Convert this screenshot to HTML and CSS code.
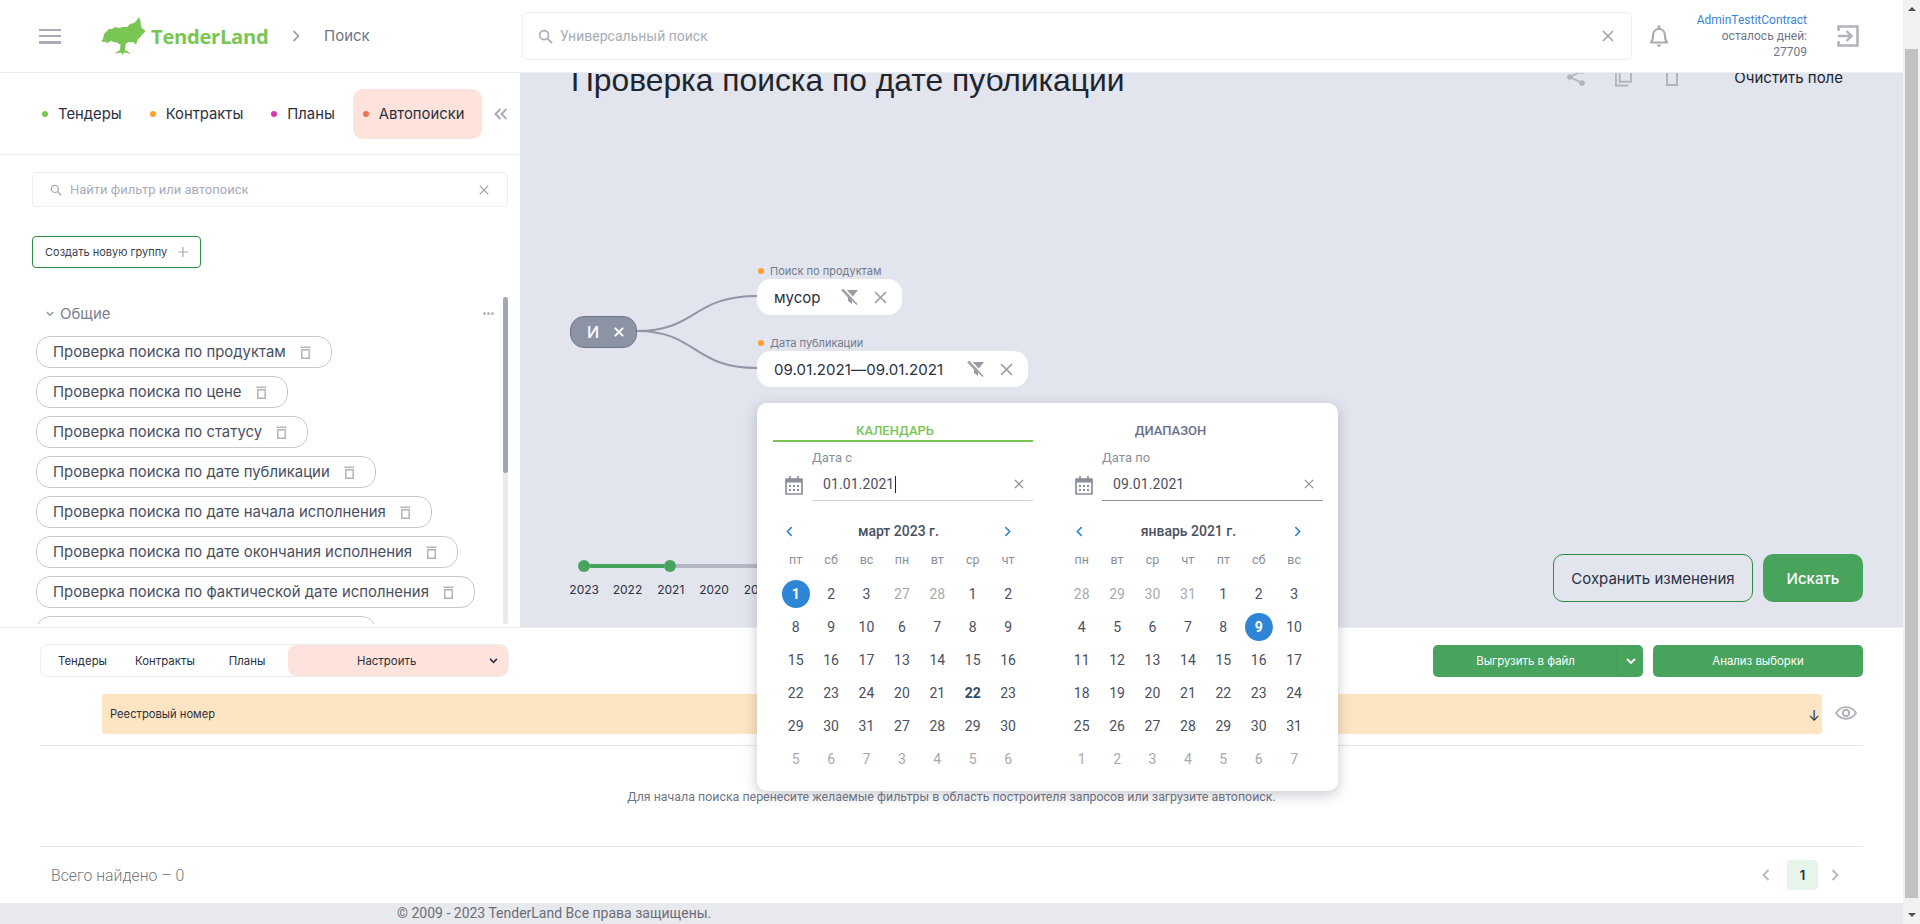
FILE: index.html
```html
<!DOCTYPE html>
<html lang="ru">
<head>
<meta charset="utf-8">
<title>TenderLand — Поиск</title>
<link rel="stylesheet" href="styles.css">
</head>
<body>
<svg class="defs" width="0" height="0" aria-hidden="true">
  <symbol id="i-search" viewBox="0 0 16 16"><circle cx="6.5" cy="6.5" r="4.8" fill="none" stroke="currentColor" stroke-width="1.7"/><path d="M10 10l5 5" stroke="currentColor" stroke-width="2" fill="none"/></symbol>
  <symbol id="i-x" viewBox="0 0 12 12"><path d="M1 1l10 10M11 1L1 11" stroke="currentColor" stroke-width="1.5" fill="none"/></symbol>
  <symbol id="i-x2" viewBox="0 0 12 12"><path d="M1 1l10 10M11 1L1 11" stroke="currentColor" stroke-width="2.4" fill="none"/></symbol>
  <symbol id="i-trash" viewBox="0 0 11 13"><path d="M0.5 1.2h10" stroke="currentColor" stroke-width="1.4"/><path d="M1.8 3.700h7.400v8.600H1.800z" fill="none" stroke="currentColor" stroke-width="1.400"/></symbol>
  <symbol id="i-filter" viewBox="0 0 17 16"><path d="M0 1h17l-6 7.500V15l-4-3V8.500z" fill="currentColor"/><path d="M2.500 0L17 15" stroke="#fff" stroke-width="3"/><path d="M1.500 0L16 15.500" stroke="currentColor" stroke-width="1.600"/></symbol>
  <symbol id="i-cal" viewBox="0 0 18 20"><path d="M1 4h16v15H1z" fill="none" stroke="currentColor" stroke-width="1.7" stroke-linejoin="round"/><path d="M1 4h16v3.5H1z" fill="currentColor"/><path d="M5 1v4M13 1v4" stroke="currentColor" stroke-width="1.7"/><path d="M4 10h2v2H4zM8 10h2v2H8zM12 10h2v2h-2zM4 14h2v2H4zM8 14h2v2H8zM12 14h2v2h-2z" fill="currentColor"/></symbol>
  <symbol id="i-left" viewBox="0 0 8 12"><path d="M6.5 1L1.5 6l5 5" fill="none" stroke="currentColor" stroke-width="1.8"/></symbol>
  <symbol id="i-right" viewBox="0 0 8 12"><path d="M1.5 1l5 5-5 5" fill="none" stroke="currentColor" stroke-width="1.8"/></symbol>
  <symbol id="i-down" viewBox="0 0 10 7"><path d="M1 1l4 4 4-4" fill="none" stroke="currentColor" stroke-width="1.8"/></symbol>
</svg>

<div class="page">
  <header class="topbar">
    <div class="brand">
      <div class="burger"><span></span><span></span><span></span></div>
      <svg class="tree" viewBox="0 0 44 40" aria-hidden="true"><path fill="#7ac655" d="M0 24l2-2 1-5 5-5 3 0 3-2 4 1 4-1 4 0 3-3 4-1 3-3 2-3 1.500 4 .5 5 1 2 3.500 3-2 2.500-2 1.500-1 2-2.500 2-1 3-1 2.500-3-2.500-2 .5-2-.5-3 1.500-.5 1.500-.5 5 6.500 4-7.500-1.500-1.500 2.500-1.500-2.500-6.500 1 5.500-3.500.5-6-1.500 0-2-1.500-4-.5-1.500-1.500-3 2-2 .5-1-1.500-2 .5z"/></svg>
      <span class="brand-name">TenderLand</span>
      <svg class="crumb-arrow"><use href="#i-right"/></svg>
      <span class="crumb">Поиск</span>
    </div>
    <div class="global-search">
      <svg class="gs-icon"><use href="#i-search"/></svg>
      <span class="gs-text">Универсальный поиск</span>
      <svg class="gs-x"><use href="#i-x"/></svg>
    </div>
    <svg class="bell" viewBox="0 0 20 24" aria-hidden="true"><path d="M2 18.500c1.500-1.500 2-3 2-6.500 0-4 2.500-7 6-7s6 3 6 7c0 3.500.5 5 2 6.500z" fill="none" stroke="currentColor" stroke-width="2.200" stroke-linejoin="round"/><path d="M8.500 1.500h3v3h-3zM7.500 20.500h5L10 23.500z" fill="currentColor"/></svg>
    <div class="user">
      <div class="user-name">AdminTestitContract</div>
      <div>осталось дней:</div>
      <div>27709</div>
    </div>
    <svg class="exit" viewBox="0 0 22 22" aria-hidden="true"><path d="M1.500 6V1.500h19v19h-19V16" fill="none" stroke="currentColor" stroke-width="2.600"/><path d="M1 11h13M9.500 6l5 5-5 5" fill="none" stroke="currentColor" stroke-width="2.400"/></svg>
  </header>

  <div class="middle">
    <aside class="sidebar">
      <nav class="side-tabs">
        <span class="side-tab"><i class="dot dot-green"></i>Тендеры</span>
        <span class="side-tab"><i class="dot dot-orange"></i>Контракты</span>
        <span class="side-tab"><i class="dot dot-pink"></i>Планы</span>
        <span class="side-tab side-tab-on"><i class="dot dot-red"></i>Автопоиски</span>
        <svg class="collapse" viewBox="0 0 14 12" aria-hidden="true"><path d="M6.500 1L1.500 6l5 5M12.500 1l-5 5 5 5" fill="none" stroke="currentColor" stroke-width="2"/></svg>
      </nav>
      <div class="side-search">
        <svg class="ss-icon"><use href="#i-search"/></svg>
        <span class="ss-text">Найти фильтр или автопоиск</span>
        <svg class="ss-x"><use href="#i-x"/></svg>
      </div>
      <button class="new-group">Создать новую группу<svg viewBox="0 0 10 10" aria-hidden="true"><path d="M5 0v10M0 5h10" stroke="currentColor" stroke-width="1.200"/></svg></button>
      <div class="side-list">
        <div class="side-content">
          <div class="group-head">
            <svg class="group-chev"><use href="#i-down"/></svg>
            <span class="group-name">Общие</span>
            <span class="group-more"><i></i><i></i><i></i></span>
          </div>
          <div class="chips">
            <div class="chip"><span>Проверка поиска по продуктам</span><svg><use href="#i-trash"/></svg></div>
            <div class="chip"><span>Проверка поиска по цене</span><svg><use href="#i-trash"/></svg></div>
            <div class="chip"><span>Проверка поиска по статусу</span><svg><use href="#i-trash"/></svg></div>
            <div class="chip"><span>Проверка поиска по дате публикации</span><svg><use href="#i-trash"/></svg></div>
            <div class="chip"><span>Проверка поиска по дате начала исполнения</span><svg><use href="#i-trash"/></svg></div>
            <div class="chip"><span>Проверка поиска по дате окончания исполнения</span><svg><use href="#i-trash"/></svg></div>
            <div class="chip"><span>Проверка поиска по фактической дате исполнения</span><svg><use href="#i-trash"/></svg></div>
            <div class="chip"><span>Проверка поиска по дате публикации</span><svg><use href="#i-trash"/></svg></div>
          </div>
        </div>
        <div class="side-scroll"><div class="side-thumb"></div></div>
      </div>
    </aside>

    <main class="workspace">
      <div class="ws-head">
        <h1 class="ws-title">Проверка поиска по дате публикации</h1>
        <svg class="ws-share" viewBox="0 0 18 18" aria-hidden="true"><circle cx="3" cy="9" r="2.800" fill="currentColor"/><circle cx="15" cy="3" r="2.800" fill="currentColor"/><circle cx="15" cy="15" r="2.800" fill="currentColor"/><path d="M3 9l12-6M3 9l12 6" stroke="currentColor" stroke-width="1.800"/></svg>
        <svg class="ws-copy" viewBox="0 0 18 20" aria-hidden="true"><path d="M1 4v15h13M5 1h12v14H5z" fill="none" stroke="currentColor" stroke-width="2"/></svg>
        <svg class="ws-clip" viewBox="0 0 12 18" aria-hidden="true"><path d="M1 1h10v16H1z" fill="none" stroke="currentColor" stroke-width="2"/></svg>
        <span class="ws-clear">Очистить поле</span>
      </div>
      <div class="canvas">
        <svg class="links" viewBox="0 0 120 90" aria-hidden="true"><path d="M0 43C60 43 55 8 120 8M0 43C60 43 55 80 120 80" fill="none" stroke="#8f96a6" stroke-width="2"/></svg>
        <div class="op-node"><span>И</span><svg><use href="#i-x2"/></svg></div>
        <div class="node-label node-label-a"><i class="dot dot-orange"></i>Поиск по продуктам</div>
        <div class="value-node value-node-a"><span>мусор</span><svg class="vn-filter"><use href="#i-filter"/></svg><svg class="vn-x"><use href="#i-x"/></svg></div>
        <div class="node-label node-label-b"><i class="dot dot-orange"></i>Дата публикации</div>
        <div class="value-node value-node-b"><span>09.01.2021—09.01.2021</span><svg class="vn-filter"><use href="#i-filter"/></svg><svg class="vn-x"><use href="#i-x"/></svg></div>
      </div>
      <div class="ws-foot">
        <div class="timeline">
          <div class="track"><i class="t-dot"></i><i class="t-on"></i><i class="t-dot"></i><i class="t-off"></i></div>
          <div class="years"><span>2023</span><span>2022</span><span>2021</span><span>2020</span><span>2019</span></div>
        </div>
        <button class="btn-outline">Сохранить изменения</button>
        <button class="btn-green">Искать</button>
      </div>
    </main>
  </div>

  <section class="results">
    <div class="res-bar">
      <div class="seg">
        <span class="seg-item seg-a">Тендеры</span>
        <span class="seg-item seg-b">Контракты</span>
        <span class="seg-item seg-c">Планы</span>
        <span class="seg-on"><span class="seg-on-text">Настроить</span><svg><use href="#i-down"/></svg></span>
      </div>
      <div class="res-actions">
        <button class="btn-export"><span>Выгрузить в файл</span><svg><use href="#i-down"/></svg></button>
        <button class="btn-analyse">Анализ выборки</button>
      </div>
    </div>
    <div class="col-row">
      <div class="col-head"><span>Реестровый номер</span><span class="col-sort">↓</span></div>
      <svg class="eye" viewBox="0 0 22 14" aria-hidden="true"><path d="M1 7c2.500-3.800 6-5.800 10-5.800S18.500 3.200 21 7c-2.500 3.800-6 5.800-10 5.800S3.500 10.800 1 7z" fill="none" stroke="currentColor" stroke-width="1.700"/><circle cx="11" cy="7" r="3.200" fill="none" stroke="currentColor" stroke-width="1.900"/></svg>
    </div>
    <div class="res-empty">Для начала поиска перенесите желаемые фильтры в область построителя запросов или загрузите автопоиск.</div>
    <div class="res-foot">
      <span class="res-total">Всего найдено – 0</span>
      <div class="pager">
        <svg><use href="#i-left"/></svg>
        <span class="pager-num">1</span>
        <svg><use href="#i-right"/></svg>
      </div>
    </div>
  </section>

  <footer class="copyright">© 2009 - 2023 TenderLand Все права защищены.</footer>

  <div class="datepop">
    <div class="dp-col">
      <div class="dp-tab dp-tab-on">КАЛЕНДАРЬ</div>
      <div class="dp-label">Дата с</div>
      <div class="dp-input">
        <svg class="dp-cal"><use href="#i-cal"/></svg>
        <div class="dp-field dp-field-a"><span class="dp-value">01.01.2021<i class="caret"></i></span><svg><use href="#i-x"/></svg></div>
      </div>
      <div class="cal cal-a">
        <div class="cal-head"><svg><use href="#i-left"/></svg><span>март 2023 г.</span><svg><use href="#i-right"/></svg></div>
        <div class="cal-grid">
          <b>пт</b><b>сб</b><b>вс</b><b>пн</b><b>вт</b><b>ср</b><b>чт</b>
          <span class="sel"><em>1</em></span><span>2</span><span>3</span><span class="off">27</span><span class="off">28</span><span>1</span><span>2</span>
          <span>8</span><span>9</span><span>10</span><span>6</span><span>7</span><span>8</span><span>9</span>
          <span>15</span><span>16</span><span>17</span><span>13</span><span>14</span><span>15</span><span>16</span>
          <span>22</span><span>23</span><span>24</span><span>20</span><span>21</span><span class="today">22</span><span>23</span>
          <span>29</span><span>30</span><span>31</span><span>27</span><span>28</span><span>29</span><span>30</span>
          <span class="off">5</span><span class="off">6</span><span class="off">7</span><span class="off">3</span><span class="off">4</span><span class="off">5</span><span class="off">6</span>
        </div>
      </div>
    </div>
    <div class="dp-col">
      <div class="dp-tab dp-tab-off">ДИАПАЗОН</div>
      <div class="dp-label">Дата по</div>
      <div class="dp-input">
        <svg class="dp-cal"><use href="#i-cal"/></svg>
        <div class="dp-field dp-field-b"><span class="dp-value">09.01.2021</span><svg><use href="#i-x"/></svg></div>
      </div>
      <div class="cal cal-b">
        <div class="cal-head"><svg><use href="#i-left"/></svg><span>январь 2021 г.</span><svg><use href="#i-right"/></svg></div>
        <div class="cal-grid">
          <b>пн</b><b>вт</b><b>ср</b><b>чт</b><b>пт</b><b>сб</b><b>вс</b>
          <span class="off">28</span><span class="off">29</span><span class="off">30</span><span class="off">31</span><span>1</span><span>2</span><span>3</span>
          <span>4</span><span>5</span><span>6</span><span>7</span><span>8</span><span class="sel"><em>9</em></span><span>10</span>
          <span>11</span><span>12</span><span>13</span><span>14</span><span>15</span><span>16</span><span>17</span>
          <span>18</span><span>19</span><span>20</span><span>21</span><span>22</span><span>23</span><span>24</span>
          <span>25</span><span>26</span><span>27</span><span>28</span><span>29</span><span>30</span><span>31</span>
          <span class="off">1</span><span class="off">2</span><span class="off">3</span><span class="off">4</span><span class="off">5</span><span class="off">6</span><span class="off">7</span>
        </div>
      </div>
    </div>
  </div>
</div>

<div class="pagescroll">
  <i class="ps-up"></i>
  <div class="ps-track"><div class="ps-thumb"></div></div>
  <i class="ps-down"></i>
</div>
</body>
</html>
```

FILE: styles.css
```css
* { box-sizing: border-box; }
html, body { margin: 0; height: 924px; overflow: hidden; }
body { display: flex; font-family: Inter, "Noto Sans", sans-serif; color: #2b3040; background: #fff; }
.defs { position: absolute; }
svg { display: block; flex: none; }
button { font-family: inherit; cursor: pointer; }
i, em { font-style: normal; }

.page { position: relative; width: 1903px; height: 924px; display: flex; flex-direction: column; overflow: hidden; }

/* header */
.topbar { height: 73px; flex: none; display: flex; align-items: center; border-bottom: 1px solid #eceef1; background: #fff; position: relative; z-index: 2; }
.brand { width: 522px; flex: none; display: flex; align-items: center; padding-left: 39px; }
.burger { width: 22px; height: 15px; display: flex; flex-direction: column; justify-content: space-between; }
.burger span { height: 2.500px; background: #a9abb6; }
.tree { width: 44px; height: 40px; margin-left: 40px; margin-top: 2px; }
.brand-name { width: 116px; margin-left: 6px; font-family: "Open Sans", sans-serif; font-size: 20.200px; font-weight: 700; color: #7ac655; letter-spacing: -.3px; white-space: nowrap; }
.crumb-arrow { width: 8px; height: 12px; margin-left: 25px; color: #a0a5b1; }
.crumb { margin-left: 24px; font-size: 15px; color: #6f7585; margin-top: -1px; }

.global-search { width: 1110px; height: 48px; flex: none; display: flex; align-items: center; border: 1px solid #eceef1; border-radius: 6px; padding: 0 12px 0 15px; }
.gs-icon { width: 15px; height: 15px; color: #a8acb8; }
.gs-text { margin-left: 7px; flex: 1; font-family: Roboto, sans-serif; font-size: 14px; color: #a8acb8; }
.gs-x { width: 12px; height: 12px; color: #a0a1a8; margin-right: 5px; }
.bell { width: 20px; height: 24px; margin-left: 17px; color: #a9abb3; }
.user { width: 120px; margin-left: 18px; text-align: right; font-family: Roboto, sans-serif; font-size: 12px; line-height: 16px; color: #70768a; }
.user-name { color: #3a83d8; white-space: nowrap; }
.exit { width: 22px; height: 22px; margin-left: 30px; color: #b3b4bb; }

/* layout */
.middle { height: 554px; flex: none; display: flex; }
.sidebar { width: 520px; flex: none; display: flex; flex-direction: column; background: #fff; }

.side-tabs { height: 82px; flex: none; display: flex; align-items: center; padding-left: 32px; border-bottom: 1px solid #eceef1; }
.side-tab { height: 50px; display: flex; align-items: center; padding: 0 18px 0 10px; font-size: 14.800px; color: #2b3040; border-radius: 10px; white-space: nowrap; }
.side-tab-on { background: #fde3dc; }
.dot { width: 6px; height: 6px; border-radius: 50%; margin-right: 10px; flex: none; }
.dot-green { background: #7ac655; }
.dot-orange { background: #ff9f2e; }
.dot-pink { background: #d936b4; }
.dot-red { background: #f2704e; }
.collapse { width: 14px; height: 12px; margin-left: 12px; color: #a8abb8; }

.side-search { height: 35px; flex: none; margin: 17px 12px 0 32px; display: flex; align-items: center; border: 1px solid #eceef1; border-radius: 4px; padding: 0 18px 0 17px; }
.ss-icon { width: 12px; height: 12px; color: #a8acb8; }
.ss-text { margin-left: 8px; flex: 1; font-family: Roboto, sans-serif; font-size: 13px; color: #a8acb8; }
.ss-x { width: 10px; height: 10px; color: #a0a2aa; }

.new-group { align-self: flex-start; margin: 29px 0 0 32px; height: 32px; width: 169px; display: flex; align-items: center; padding: 0 12px; background: #fff; border: 1px solid #2e8b43; border-radius: 4px; font-size: 11px; color: #3a3f4e; white-space: nowrap; }
.new-group svg { width: 10px; height: 10px; margin-left: auto; color: #a8abb8; }

.side-list { flex: 1; min-height: 0; margin-top: 29px; margin-bottom: 3px; display: flex; overflow: hidden; }
.side-content { flex: 1; min-width: 0; overflow: hidden; }
.group-head { height: 33px; margin-bottom: 6px; display: flex; align-items: center; padding: 0 9px 0 46px; }
.group-chev { width: 8px; height: 6px; color: #8c93a3; }
.group-name { margin-left: 6px; flex: 1; font-size: 15px; color: #7b8191; }
.group-more { display: flex; gap: 1px; }
.group-more i { width: 3px; height: 3px; border-radius: 50%; background: #b3b6c0; }
.chips { padding-left: 36px; display: flex; flex-direction: column; align-items: flex-start; gap: 8px; }
.chip { height: 32px; flex: none; display: flex; align-items: center; padding: 0 20px 0 16px; border: 1px solid #c6c9d2; border-radius: 14px; font-size: 14.900px; color: #4a4f5f; white-space: nowrap; }
.chip svg { width: 11px; height: 13px; margin-left: 14px; color: #aeb0b8; }
.side-scroll { width: 5px; flex: none; margin: 0 12px 0 0; background: #e8eaef; border-radius: 3px; }
.side-thumb { height: 176px; background: #a2a7b5; border-radius: 3px; }

/* workspace */
.workspace { flex: 1; min-width: 0; display: flex; flex-direction: column; background: #e2e5ed; overflow: hidden; }
.ws-head { flex: none; margin-top: -11px; height: 36px; display: flex; align-items: center; padding: 0 60px 0 51px; }
.ws-title { margin: 0; flex: 1; font-family: "Liberation Sans", Arial, sans-serif; font-size: 31.800px; font-weight: 400; line-height: 36px; color: #20242e; white-space: nowrap; }
.ws-share { width: 18px; height: 18px; color: #b3b5bd; margin-top: -6px; }
.ws-copy { width: 17px; height: 20px; margin-left: 30px; color: #b3b5bd; margin-top: -6px; }
.ws-clip { width: 12px; height: 18px; margin-left: 34px; color: #b3b5bd; margin-top: -6px; }
.ws-clear { margin-left: 56px; font-size: 15px; color: #20242e; margin-top: -6px; }

.canvas { position: relative; flex: 1; min-height: 0; }
.links { position: absolute; left: 117px; top: 190px; width: 120px; height: 90px; }
.op-node { position: absolute; left: 50px; top: 218px; width: 67px; height: 32px; display: flex; align-items: center; padding-left: 16px; background: #8b93a5; border: 1px solid #6f7889; border-radius: 14px; color: #fff; font-size: 16px; font-weight: 500; }
.op-node svg { width: 10px; height: 10px; margin-left: 15px; }
.node-label { position: absolute; left: 238px; display: flex; align-items: center; font-size: 11px; line-height: 14px; color: #737a8c; white-space: nowrap; }
.node-label .dot { margin-right: 6px; }
.node-label-a { top: 166px; }
.node-label-b { top: 238px; }
.value-node { position: absolute; left: 237px; height: 36px; display: flex; align-items: center; padding: 0 15px 0 17px; background: #fff; border-radius: 14px; font-size: 15px; color: #2b3040; white-space: nowrap; }
.value-node-a { top: 181px; width: 145px; }
.value-node-b { top: 253px; width: 271px; letter-spacing: .1px; }
.vn-filter { width: 17px; height: 16px; margin-left: auto; color: #9a9ca4; }
.vn-x { width: 13px; height: 13px; margin-left: 16px; color: #a0a2aa; }

.ws-foot { flex: none; height: 48px; margin-bottom: 25px; display: flex; align-items: flex-start; padding: 0 40px 0 42.500px; }
.timeline { flex: 1; padding-top: 6px; }
.track { display: flex; align-items: center; margin-left: 15px; height: 12px; }
.track i { display: block; flex: none; }
.t-dot { width: 12px; height: 12px; border-radius: 50%; background: #48a35d; }
.t-on { width: 74px; height: 4px; background: #48a35d; }
.t-off { width: 86px; height: 4px; background: #b4b7c3; border-radius: 0 2px 2px 0; }
.years { display: flex; margin-top: 11px; font-size: 12px; line-height: 14px; color: #2b3040; }
.years span { width: 43.300px; text-align: center; }
.btn-outline { width: 200px; height: 48px; flex: none; background: transparent; border: 1px solid #2e8b43; border-radius: 10px; font-size: 15px; color: #2b3040; padding: 0; }
.btn-green { width: 100px; height: 48px; flex: none; margin-left: 10px; background: #48a35d; border: 0; border-radius: 10px; color: #fff; font-size: 15px; font-weight: 500; padding: 0; }

/* results */
.results { flex: 1; min-height: 0; display: flex; flex-direction: column; padding: 0 40px; background: #fff; border-top: 1px solid #eceef1; }
.res-bar { flex: none; display: flex; justify-content: space-between; margin-top: 16px; height: 33px; }
.seg { width: 469px; height: 33px; display: flex; align-items: center; border: 1px solid #eceef1; border-radius: 8px; font-size: 11.400px; color: #2b3040; white-space: nowrap; }
.seg-item { flex: none; }
.seg-a { margin-left: 17px; }
.seg-b { margin-left: 28px; }
.seg-c { margin-left: 34px; }
.seg-on { margin-left: auto; width: 220px; flex: none; height: 31px; display: flex; align-items: center; background: #fde3dc; border-radius: 8px; padding-right: 10px; }
.seg-on-text { flex: 1; padding-left: 69px; }
.seg-on svg { width: 9px; height: 6px; color: #2b3040; }
.res-actions { display: flex; gap: 10px; padding-top: 1px; }
.btn-export, .btn-analyse { width: 210px; height: 32px; background: #48a35d; border: 0; border-radius: 5px; color: #fff; font-size: 11.400px; padding: 0; }
.btn-export { display: flex; align-items: center; }
.btn-export span { flex: 1; text-align: center; padding-left: 5px; padding-right: 3px; height: 32px; line-height: 32px; border-right: 1px solid #44a058; }
.btn-export svg { width: 10px; height: 7px; margin: 0 7px 0 9px; }
.col-row { flex: none; margin-top: 17px; padding-bottom: 11px; border-bottom: 1px solid #e4e5e8; display: flex; align-items: center; padding-left: 62px; }
.col-head { width: 1720px; height: 40px; flex: none; display: flex; align-items: center; justify-content: space-between; padding: 0 2px 0 8px; background: #fde5c3; border-radius: 3px; font-size: 11.200px; color: #2b3040; }
.col-sort { font-size: 14px; margin-top: 2px; }
.eye { width: 22px; height: 14px; margin-left: 13px; margin-top: -2px; color: #aeb0b8; }
.res-empty { height: 101px; flex: none; padding-top: 41px; text-align: center; font-family: Roboto, sans-serif; font-size: 12.400px; line-height: 20px; color: #6f7585; border-bottom: 1px solid #e4e5e8; }
.res-foot { flex: 1; display: flex; align-items: center; justify-content: space-between; padding: 0 24px 0 11px; }
.res-total { font-family: Roboto, sans-serif; font-size: 15.800px; font-weight: 300; color: #777; }
.pager { display: flex; align-items: center; color: #b5b7bd; }
.pager svg { width: 8px; height: 12px; }
.pager-num { width: 31px; height: 30px; margin: 0 13px 0 17px; display: flex; align-items: center; justify-content: center; background: #e6f4ea; border-radius: 4px; font-size: 13px; font-weight: 600; color: #2b3040; }

.copyright { height: 21px; flex: none; padding-left: 397px; background: #e8e9ed; font-family: Roboto, sans-serif; font-size: 14px; line-height: 21px; color: #6a6e78; }

/* date popover */
.datepop { position: absolute; left: 757px; top: 403px; width: 581px; height: 388px; display: flex; gap: 30px; padding: 20px 15px 0 16px; background: #fff; border-radius: 10px; box-shadow: 0 4px 14px rgba(60, 66, 90, .28); font-family: Roboto, sans-serif; z-index: 3; }
.dp-col { width: 260px; flex: none; }
.dp-tab { height: 19px; font-size: 13px; font-weight: 500; line-height: 16px; text-align: center; }
.dp-tab-on { color: #7ac655; padding-right: 16px; border-bottom: 2px solid #7ac655; }
.dp-tab-off { color: #687088; padding-right: 45px; }
.dp-label { margin: 9px 0 0 39px; font-size: 13px; line-height: 14px; color: #8a8f9c; }
.dp-input { margin-top: 3px; height: 33px; display: flex; align-items: center; padding-left: 12px; }
.dp-cal { width: 18px; height: 20px; color: #8a8f9c; }
.dp-field { width: 221px; height: 33px; margin-left: 9px; display: flex; align-items: center; justify-content: space-between; padding: 0 9px 0 11px; }
.dp-field-a { border-bottom: 1px solid #cdd0da; }
.dp-field-b { border-bottom: 1px solid #8f9298; }
.dp-field svg { width: 10px; height: 10px; color: #8a8f9c; }
.dp-value { display: flex; align-items: center; font-size: 14px; color: #4a5060; letter-spacing: .1px; }
.caret { width: 1px; height: 17px; background: #20242e; margin-left: 1px; }
.cal { width: 247.800px; margin-top: 18px; }
.cal-a { margin-left: 5px; }
.cal-b { margin-left: 1px; }
.cal-head { height: 24px; display: flex; align-items: center; justify-content: space-between; font-size: 14px; font-weight: 500; color: #4a5060; }
.cal-a .cal-head { padding: 0 15px 0 8px; }
.cal-b .cal-head { padding: 0 11px 0 12px; }
.cal-head svg { width: 7px; height: 11px; color: #2f86d6; }
.cal-grid { display: grid; grid-template-columns: repeat(7, 1fr); grid-template-rows: 28px repeat(6, 33px); margin-top: 6px; font-size: 14px; color: #4a5060; }
.cal-grid b { font-size: 12.500px; font-weight: 400; color: #8a8f9c; display: flex; align-items: center; justify-content: center; height: 20px; }
.cal-grid span { display: flex; align-items: center; justify-content: center; }
.cal-grid span.off { color: #a8a9ad; }
.cal-grid span.today { font-weight: 700; color: #3d4a66; }
.sel em { width: 28px; height: 28px; display: flex; align-items: center; justify-content: center; border-radius: 50%; background: #2f86d6; color: #fff; font-weight: 700; }

/* page scrollbar */
.pagescroll { width: 17px; height: 924px; flex: none; display: flex; flex-direction: column; align-items: center; background: #f1f1f1; }
.ps-up, .ps-down { width: 0; height: 0; flex: none; border-left: 4px solid transparent; border-right: 4px solid transparent; }
.ps-up { margin: 7px 0; border-bottom: 4px solid #505050; }
.ps-down { margin: 7px 0; border-top: 4px solid #505050; }
.ps-track { flex: 1; width: 100%; padding: 31px 2px 0; min-height: 0; }
.ps-thumb { height: 849px; background: #c1c1c1; }
```
